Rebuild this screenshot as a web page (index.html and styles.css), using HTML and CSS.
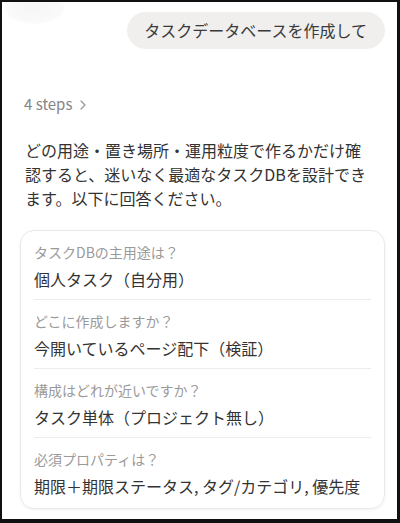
FILE: index.html
```html
<!DOCTYPE html>
<html lang="ja">
<head>
    <meta charset="UTF-8">
    <meta name="viewport" content="width=device-width, initial-scale=1.0">
    <title>タスクDB</title>
    <link rel="stylesheet" href="styles.css">
</head>
<body>

<div class="frame">
    <div class="shade"></div>

    <div class="user-row">
        <div class="bubble">タスクデータベースを作成して</div>
    </div>

    <div class="steps">
        4 steps
        <svg class="chevron" width="8" height="12" viewBox="0 0 8 12">
            <path d="M2 2l4 4-4 4" fill="none" stroke="#999" stroke-width="1.3" stroke-linecap="round" stroke-linejoin="round"/>
        </svg>
    </div>

    <p class="answer-text">どの用途・置き場所・運用粒度で作るかだけ確認すると、迷いなく最適なタスクDBを設計できます。以下に回答ください。</p>

    <div class="card">
        <div class="item">
            <div class="q">タスクDBの主用途は？</div>
            <div class="a">個人タスク（自分用）</div>
        </div>
        <div class="item">
            <div class="q">どこに作成しますか？</div>
            <div class="a">今開いているページ配下（検証）</div>
        </div>
        <div class="item">
            <div class="q">構成はどれが近いですか？</div>
            <div class="a">タスク単体（プロジェクト無し）</div>
        </div>
        <div class="item">
            <div class="q">必須プロパティは？</div>
            <div class="a">期限＋期限ステータス, タグ/カテゴリ, 優先度</div>
        </div>
    </div>
</div>

</body>
</html>
```

FILE: styles.css
```css
body {
    margin: 0;
    padding: 0;
    font-family: "Noto Sans CJK JP", "Noto Sans", sans-serif;
    color: #333;
    background: #111;
}
.frame {
    position: relative;
    box-sizing: border-box;
    width: 400px;
    height: 523px;
    border-style: solid;
    border-color: #111;
    border-width: 2px 3px 4px 2px;
    background: #fff;
    padding: 10px 12px 0 18px;
    overflow: hidden;
}
.shade {
    position: absolute;
    top: -10px;
    left: 2px;
    width: 60px;
    height: 32px;
    border-radius: 50%;
    background: radial-gradient(ellipse at center, #f6f6f6 0%, #f9f9f9 55%, rgba(255,255,255,0) 100%);
}
.user-row {
    display: flex;
    justify-content: flex-end;
}
.bubble {
    background-color: #f0efed;
    border-radius: 19px;
    padding: 6px 18px 6px 17px;
    font-size: 16px;
    line-height: 25px;
    color: #3a3a3a;
}
.steps {
    display: flex;
    align-items: center;
    gap: 7px;
    margin-top: 45px;
    padding-left: 4px;
    font-size: 15px;
    line-height: 20px;
    color: #858585;
}
.chevron {
    margin-top: 1px;
}
.answer-text {
    margin: 24px 0 0 0;
    padding: 0 12px 0 5px;
    font-size: 16px;
    line-height: 24px;
    color: #333;
}
.card {
    margin-top: 20px;
    border: 1px solid #e9e9e9;
    border-radius: 14px;
    padding: 0 13px 10px 13px;
    box-shadow: 0 1px 3px rgba(0, 0, 0, 0.06);
}
.item {
    padding: 11px 0 8px 0;
    border-bottom: 1px solid #ececec;
}
.item:last-child {
    border-bottom: none;
    padding-bottom: 0;
}
.q {
    font-size: 14px;
    line-height: 20px;
    color: #9a9a9a;
}
.a {
    margin-top: 5px;
    font-size: 16px;
    line-height: 24px;
    color: #333;
}
```
